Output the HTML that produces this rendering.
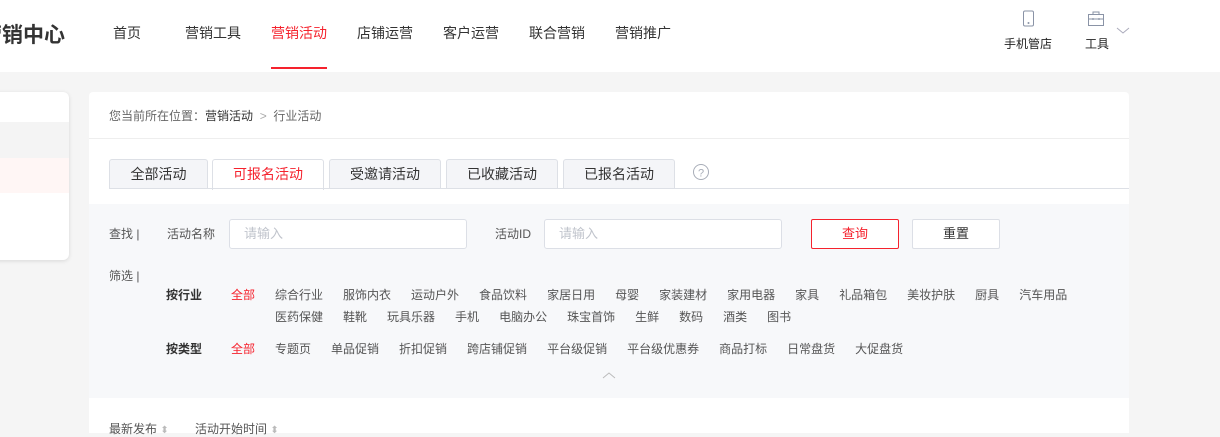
<!DOCTYPE html>
<html><head><meta charset="utf-8"><style>
*{margin:0;padding:0;box-sizing:border-box}
body{width:1220px;height:433px;overflow:hidden;background:#f5f5f5;font-family:"Liberation Sans","Noto Sans CJK SC",sans-serif;color:#333;position:relative}
.a{position:absolute;white-space:nowrap}
.hd{position:absolute;left:0;top:0;width:1220px;height:72px;background:#fff}
.nav{font-size:14px;top:23px;color:#333}
.t{font-size:12px}
.g{color:#666}
.tab{position:absolute;top:159px;height:30px;border:1px solid #dde0e6;border-bottom:none;background:#f4f5f8;border-radius:3px 3px 0 0;font-size:14px;color:#333;text-align:center;line-height:29px}
.inp{position:absolute;top:219px;height:30px;background:#fff;border:1px solid #dcdfe6;border-radius:3px;font-size:13px;color:#c0c4cc;padding-left:14px;line-height:28px}
.f{font-size:12px;color:#555}
.r span{margin-right:20px}
</style></head><body>
<div class="hd"></div>
<div class="a" style="left:-19px;top:19px;font-size:21px;font-weight:bold;color:#333">营销中心</div>
<div class="a nav" style="left:113px">首页</div>
<div class="a nav" style="left:185px">营销工具</div>
<div class="a nav" style="left:271px;color:#f5222d">营销活动</div>
<div class="a" style="left:271px;top:67px;width:56px;height:2px;background:#f5222d"></div>
<div class="a nav" style="left:357px">店铺运营</div>
<div class="a nav" style="left:443px">客户运营</div>
<div class="a nav" style="left:529px">联合营销</div>
<div class="a nav" style="left:615px">营销推广</div>
<svg class="a" style="left:1022px;top:10px" width="14" height="17"><rect x="1.5" y="1" width="10" height="15" rx="1.5" fill="none" stroke="#8a93a6"/><circle cx="6.5" cy="13" r="1" fill="#8a93a6"/></svg>
<div class="a" style="left:1004px;top:35px;font-size:12px;color:#222">手机管店</div>
<svg class="a" style="left:1087px;top:10px" width="18" height="17"><path d="M6 4V2h6v2M1.5 4.5h15v11h-15zM1.5 9h15M6 8v2M12 8v2" fill="none" stroke="#8a93a6"/></svg>
<div class="a" style="left:1085px;top:35px;font-size:12px;color:#222">工具</div>
<svg class="a" style="left:1116px;top:27px" width="14" height="8"><path d="M1 1l6 5 6-5" fill="none" stroke="#aab"/></svg>

<div class="a" style="left:-10px;top:92px;width:79px;height:168px;background:#fff;border-radius:6px;box-shadow:0 1px 4px rgba(0,0,0,.12)"></div>
<div class="a" style="left:0;top:122px;width:69px;height:36px;background:#f4f4f4"></div>
<div class="a" style="left:0;top:158px;width:69px;height:35px;background:#fff6f5"></div>

<div class="a" style="left:89px;top:92px;width:1040px;height:341px;background:#fff;border-radius:4px 4px 0 0"></div>
<div class="a t g" style="left:109px;top:107px">您当前所在位置：<span style="color:#333">营销活动</span> &nbsp;<span style="color:#aaa">&gt;</span>&nbsp; 行业活动</div>
<div class="a" style="left:89px;top:138px;width:1040px;height:1px;background:#eee"></div>
<div class="tab" style="left:109px;width:99px">全部活动</div>
<div class="tab" style="left:212px;width:112px;background:#fff;color:#f5222d;height:31px">可报名活动</div>
<div class="tab" style="left:329px;width:112px">受邀请活动</div>
<div class="tab" style="left:446px;width:112px">已收藏活动</div>
<div class="tab" style="left:563px;width:112px">已报名活动</div>
<div class="a" style="left:109px;top:188px;width:1020px;height:1px;background:#dde0e6"></div>
<svg class="a" style="left:692px;top:163px" width="18" height="18"><circle cx="9" cy="9" r="7.5" fill="none" stroke="#a8adb8"/><text x="9" y="13.5" font-size="11" text-anchor="middle" fill="#a8adb8" font-family="Liberation Sans">?</text></svg>

<div class="a" style="left:89px;top:204px;width:1040px;height:194px;background:#f7f8fa"></div>
<div class="a f" style="left:109px;top:225px">查找 |</div>
<div class="a f" style="left:167px;top:225px">活动名称</div>
<div class="inp" style="left:229px;width:238px">请输入</div>
<div class="a f" style="left:495px;top:225px">活动ID</div>
<div class="inp" style="left:544px;width:238px">请输入</div>
<div class="a" style="left:811px;top:219px;width:88px;height:30px;border:1px solid #f5222d;border-radius:2px;background:#fff;color:#f5222d;font-size:13px;text-align:center;line-height:28px">查询</div>
<div class="a" style="left:912px;top:219px;width:88px;height:30px;border:1px solid #dcdfe6;border-radius:2px;background:#fff;color:#333;font-size:13px;text-align:center;line-height:28px">重置</div>
<div class="a f" style="left:109px;top:267px">筛选 |</div>
<div class="a" style="left:166px;top:286px;font-size:12px;font-weight:bold;color:#333">按行业</div>
<div class="a f" style="left:231px;top:286px;color:#f5222d">全部</div>
<div class="a f r" style="left:275px;top:286px"><span>综合行业</span><span>服饰内衣</span><span>运动户外</span><span>食品饮料</span><span>家居日用</span><span>母婴</span><span>家装建材</span><span>家用电器</span><span>家具</span><span>礼品箱包</span><span>美妆护肤</span><span>厨具</span><span>汽车用品</span></div>
<div class="a f r" style="left:275px;top:308px"><span>医药保健</span><span>鞋靴</span><span>玩具乐器</span><span>手机</span><span>电脑办公</span><span>珠宝首饰</span><span>生鲜</span><span>数码</span><span>酒类</span><span>图书</span></div>
<div class="a" style="left:166px;top:340px;font-size:12px;font-weight:bold;color:#333">按类型</div>
<div class="a f" style="left:231px;top:340px;color:#f5222d">全部</div>
<div class="a f r" style="left:275px;top:340px"><span>专题页</span><span>单品促销</span><span>折扣促销</span><span>跨店铺促销</span><span>平台级促销</span><span>平台级优惠券</span><span>商品打标</span><span>日常盘货</span><span>大促盘货</span></div>
<svg class="a" style="left:602px;top:371px" width="14" height="8"><path d="M1 7l6-5 6 5" fill="none" stroke="#bbb"/></svg>
<div class="a f" style="left:109px;top:420px">最新发布 <span style="color:#bbb;font-size:10px">⬍</span></div>
<div class="a f" style="left:195px;top:420px">活动开始时间 <span style="color:#bbb;font-size:10px">⬍</span></div>
</body></html>
